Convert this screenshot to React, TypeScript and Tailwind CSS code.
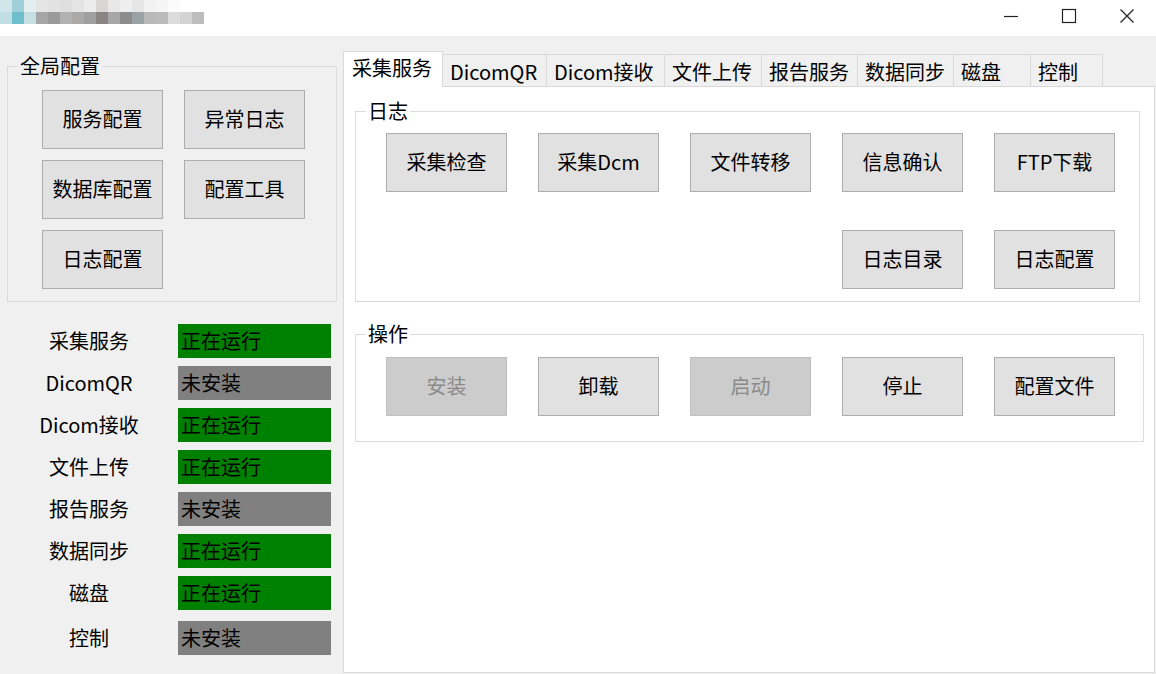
import React from 'react';

const mosaicTop = [
  'bg-[#d0e6ea]', 'bg-[#9fcfd8]', 'bg-[#e3eef0]', 'bg-[#e5e5e5]', 'bg-[#e2e2e2]', 'bg-[#dedede]',
  'bg-[#e4e4e4]', 'bg-[#ececec]', 'bg-[#d9d7d6]', 'bg-[#e8e8e8]', 'bg-[#eeeeee]', 'bg-[#e6e6e6]',
  'bg-[#f2f2f2]', 'bg-[#f5f5f5]', 'bg-[#fbfbfb]', 'bg-[#ffffff]', 'bg-[#ffffff]',
];
const mosaicBottom = [
  'bg-[#bfdfe5]', 'bg-[#6fbecb]', 'bg-[#c5dfe3]', 'bg-[#a5a5a5]', 'bg-[#9a9a9a]', 'bg-[#b2b2b2]',
  'bg-[#acaaa8]', 'bg-[#a0a0a0]', 'bg-[#8a8482]', 'bg-[#a7a7a7]', 'bg-[#8c8c8c]', 'bg-[#9aa2a6]',
  'bg-[#b9b9b9]', 'bg-[#bbbbbb]', 'bg-[#dcdcdc]', 'bg-[#d3d3d3]', 'bg-[#bdbdbd]',
];

const tabs = [
  { label: '采集服务', w: 'w-[100px]' },
  { label: 'DicomQR', w: 'w-[104px]' },
  { label: 'Dicom接收', w: 'w-[118px]' },
  { label: '文件上传', w: 'w-[97px]' },
  { label: '报告服务', w: 'w-[96px]' },
  { label: '数据同步', w: 'w-[96px]' },
  { label: '磁盘', w: 'w-[77px]' },
  { label: '控制', w: 'w-[72px]' },
];

const services = [
  { name: '采集服务', running: true },
  { name: 'DicomQR', running: false },
  { name: 'Dicom接收', running: true },
  { name: '文件上传', running: true },
  { name: '报告服务', running: false },
  { name: '数据同步', running: true },
  { name: '磁盘', running: true },
  { name: '控制', running: false },
];

function WinButton({ children, disabled, className }: { children: React.ReactNode; disabled?: boolean; className?: string }) {
  return (
    <button
      className={`flex items-center justify-center w-[121px] h-[59px] pb-[2px] border text-[20px] leading-none ${
        disabled
          ? 'bg-[#cccccc] border-[#bfbfbf] text-[#8a8a8a]'
          : 'bg-[#e1e1e1] border-[#adadad] text-black'
      } ${className ?? ''}`}
    >
      {children}
    </button>
  );
}

export default function App() {
  return (
    <div
      className="w-[1156px] h-[674px] flex flex-col bg-[#f0f0f0] overflow-hidden text-black"
      style={{ fontFamily: '"Noto Sans CJK SC", "Noto Sans", sans-serif' }}
    >
      {/* Title bar */}
      <div className="h-[36px] bg-white flex justify-between shrink-0">
        <div className="flex flex-col">
          <div className="flex">
            {mosaicTop.map((c, i) => (
              <div key={i} className={`w-[12px] h-[12px] ${c}`} />
            ))}
          </div>
          <div className="flex">
            {mosaicBottom.map((c, i) => (
              <div key={i} className={`w-[12px] h-[12px] ${c}`} />
            ))}
          </div>
        </div>
        <div className="flex h-[32px]">
          <div className="w-[58px] flex items-center justify-center">
            <svg width="16" height="16" viewBox="0 0 16 16">
              <path d="M1 8.5h14" stroke="#222" strokeWidth="1.2" />
            </svg>
          </div>
          <div className="w-[58px] flex items-center justify-center">
            <svg width="16" height="16" viewBox="0 0 16 16">
              <rect x="1.5" y="1.5" width="13" height="13" fill="none" stroke="#222" strokeWidth="1.2" />
            </svg>
          </div>
          <div className="w-[58px] flex items-center justify-center">
            <svg width="16" height="16" viewBox="0 0 16 16">
              <path d="M1.5 1.5l13 13M14.5 1.5l-13 13" stroke="#222" strokeWidth="1.2" />
            </svg>
          </div>
        </div>
      </div>

      {/* Body */}
      <div className="flex flex-1 min-h-0">
        {/* Left column */}
        <div className="w-[343px] shrink-0 flex flex-col">
          <fieldset className="ml-[7px] mt-[20px] w-[330px] border border-[#dcdcdc]">
            <legend className="ml-[10px] px-[2px] text-[20px] leading-[20px]">全局配置</legend>
            <div className="grid grid-cols-[121px_121px] gap-x-[21px] gap-y-[11px] pl-[34px] pt-[14px] pb-[12px]">
              <WinButton>服务配置</WinButton>
              <WinButton>异常日志</WinButton>
              <WinButton>数据库配置</WinButton>
              <WinButton>配置工具</WinButton>
              <WinButton>日志配置</WinButton>
            </div>
          </fieldset>

          <div className="mt-[22px] flex flex-col gap-[8px]">
            {services.map((s, i) => (
              <div key={s.name} className={`flex items-center h-[34px] ${i === services.length - 1 ? 'mt-[3px]' : ''}`}>
                <div className="w-[178px] text-center text-[20px] leading-none">{s.name}</div>
                <div
                  className={`w-[153px] h-[34px] flex items-center pl-[3px] text-[20px] leading-none ${
                    s.running ? 'bg-[#008000]' : 'bg-[#808080]'
                  }`}
                >
                  {s.running ? '正在运行' : '未安装'}
                </div>
              </div>
            ))}
          </div>
        </div>

        {/* Tab control */}
        <div className="w-[812px] flex flex-col pt-[15px] pb-[1px]">
          <div className="flex items-end h-[35px] shrink-0">
            {tabs.map((t, i) =>
              i === 0 ? (
                <div
                  key={t.label}
                  className={`${t.w} h-[36px] -mb-px relative z-10 bg-white border border-b-0 border-[#d9d9d9] pl-[8px] pt-[5px] text-[20px] leading-[22px]`}
                >
                  {t.label}
                </div>
              ) : (
                <div
                  key={t.label}
                  className={`${t.w} h-[32px] bg-[#f0f0f0] border-t border-r border-[#d9d9d9] pl-[7px] pt-[6px] text-[20px] leading-[22px]`}
                >
                  {t.label}
                </div>
              )
            )}
          </div>

          <div className="flex-1 bg-white border border-[#d9d9d9] flex flex-col">
            <fieldset className="ml-[11px] mt-[14px] w-[785px] border border-[#dcdcdc]">
              <legend className="ml-[10px] px-[2px] text-[20px] leading-[20px]">日志</legend>
              <div className="grid grid-cols-[repeat(5,121px)] gap-x-[31px] gap-y-[38px] pl-[30px] pt-[12px] pb-[12px]">
                <WinButton>采集检查</WinButton>
                <WinButton>采集Dcm</WinButton>
                <WinButton>文件转移</WinButton>
                <WinButton>信息确认</WinButton>
                <WinButton>FTP下载</WinButton>
                <WinButton className="col-start-4">日志目录</WinButton>
                <WinButton>日志配置</WinButton>
              </div>
            </fieldset>

            <fieldset className="ml-[11px] mt-[22px] w-[789px] border border-[#dcdcdc]">
              <legend className="ml-[10px] px-[2px] text-[20px] leading-[20px]">操作</legend>
              <div className="grid grid-cols-[repeat(5,121px)] gap-x-[31px] pl-[30px] pt-[13px] pb-[25px]">
                <WinButton disabled>安装</WinButton>
                <WinButton>卸载</WinButton>
                <WinButton disabled>启动</WinButton>
                <WinButton>停止</WinButton>
                <WinButton>配置文件</WinButton>
              </div>
            </fieldset>
          </div>
        </div>
      </div>
    </div>
  );
}
